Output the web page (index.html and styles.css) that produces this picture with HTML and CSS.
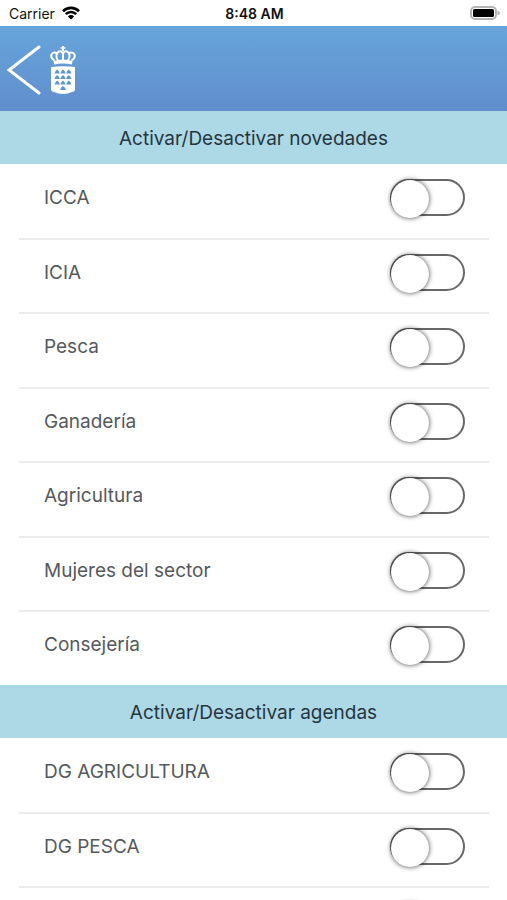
FILE: index.html
```html
<!DOCTYPE html>
<html lang="es">
<head>
  <meta charset="utf-8">
  <meta name="viewport" content="width=device-width, initial-scale=1">
  <title>Notificaciones</title>
  <link rel="stylesheet" href="styles.css">
</head>
<body>
  <div class="app">
    <div class="status">
      <div class="status-left">
        <span>Carrier</span>
        <svg class="wifi" viewBox="0 0 18 14" aria-hidden="true">
          <path d="M1 5.2a11.4 11.4 0 0 1 16 0" />
          <path d="M3.8 8.1a7.4 7.4 0 0 1 10.4 0" />
          <path class="solid" d="M9 13.6 5.9 10.4a4.4 4.4 0 0 1 6.2 0z" />
        </svg>
      </div>
      <span class="clock">8:48 AM</span>
      <svg class="battery" viewBox="0 0 30 14" aria-hidden="true">
        <rect class="shell" x="1" y="1" width="25" height="12" rx="4" />
        <rect x="3" y="3" width="21" height="8" rx="1.500" />
        <path class="tip" d="M27.5 4.5q2.5 1 2.5 2.5t-2.5 2.5z" />
      </svg>
    </div>

    <header class="bar">
      <button class="back" type="button" aria-label="Volver">
        <svg viewBox="0 0 34 50" aria-hidden="true"><path d="M32 2 2 25l30 23" /></svg>
      </button>
      <svg class="crest" viewBox="0 0 26 48" aria-hidden="true">
        <path class="fill" d="M12 0h2v1.200h1.500v1.600H14V5h-2V2.800h-1.500V1.200H12z" />
        <g class="crown">
          <path d="M4.500 14.500C1.500 12.500 .5 10 1.800 8 3.500 6 6.500 6 7.500 8.500" />
          <path d="M8 14.500C5.500 11 6 6.500 9 5.500c2.200-.6 3.500.5 4 2.500.5-2 1.800-3.100 4-2.500 3 1 3.500 5.500 1 9" />
          <path d="M21.500 14.500c3-2 4-4.500 2.700-6.500C22.500 6 19.500 6 18.500 8.500M13 6v8" />
        </g>
        <path class="fill" d="M3.500 15q9.500-3.200 19 0l-.7 3.500q-8.800-2.200-17.600 0z" />
        <path class="fill" d="M1 21q12-1.500 24 0v22q0 2.500-3 3-4 2-9 2t-9-2q-3-.5-3-3z" />
        <g class="peaks">
          <path d="M4.500 27.500q1-3 2.700-4 1.700 1 2.700 4zM10.300 27.500q1-3 2.700-4 1.700 1 2.700 4zM16.100 27.500q1-3 2.700-4 1.700 1 2.700 4z" />
          <path d="M4.500 33q1-3 2.700-4 1.700 1 2.700 4zM10.300 33q1-3 2.700-4 1.700 1 2.700 4zM16.100 33q1-3 2.700-4 1.700 1 2.700 4z" />
          <path d="M4.500 38.500q1-3 2.700-4 1.700 1 2.700 4zM10.300 38.500q1-3 2.700-4 1.700 1 2.700 4zM16.100 38.500q1-3 2.700-4 1.700 1 2.700 4z" />
          <path d="M10 44q1-3 3-4 2 1 3 4z" />
        </g>
      </svg>
    </header>

    <main>
      <h2 class="heading">Activar/Desactivar novedades</h2>
      <ul class="list">
        <li class="row"><label for="n1">ICCA</label><input class="toggle" id="n1" type="checkbox" role="switch"></li>
        <li class="row"><label for="n2">ICIA</label><input class="toggle" id="n2" type="checkbox" role="switch"></li>
        <li class="row"><label for="n3">Pesca</label><input class="toggle" id="n3" type="checkbox" role="switch"></li>
        <li class="row"><label for="n4">Ganadería</label><input class="toggle" id="n4" type="checkbox" role="switch"></li>
        <li class="row"><label for="n5">Agricultura</label><input class="toggle" id="n5" type="checkbox" role="switch"></li>
        <li class="row"><label for="n6">Mujeres del sector</label><input class="toggle" id="n6" type="checkbox" role="switch"></li>
        <li class="row"><label for="n7">Consejería</label><input class="toggle" id="n7" type="checkbox" role="switch"></li>
      </ul>
      <h2 class="heading">Activar/Desactivar agendas</h2>
      <ul class="list">
        <li class="row"><label for="a1">DG AGRICULTURA</label><input class="toggle" id="a1" type="checkbox" role="switch"></li>
        <li class="row"><label for="a2">DG PESCA</label><input class="toggle" id="a2" type="checkbox" role="switch"></li>
        <li class="row"><input class="toggle" type="checkbox" role="switch" aria-label="Agenda"></li>
      </ul>
    </main>
  </div>
</body>
</html>
```
FILE: styles.css
```css
* {
  box-sizing: border-box;
}

body {
  margin: 0;
  background: #fff;
  font-family: Inter, "Liberation Sans", sans-serif;
}

.app {
  display: flex;
  flex-direction: column;
  height: 100vh;
}

.status {
  flex: none;
  display: grid;
  grid-template-columns: 1fr auto 1fr;
  align-items: center;
  height: 26px;
  padding: 0 7px 0 9px;
  font-size: 14px;
  color: #111;
}

.status-left {
  display: flex;
  align-items: center;
  gap: 7px;
}

.wifi {
  width: 18px;
  height: 14px;
  fill: none;
  stroke: #000;
  stroke-width: 2.6;
}

.wifi .solid {
  fill: #000;
  stroke: none;
}

.clock {
  font-weight: 600;
}

.battery {
  justify-self: end;
  width: 30px;
  height: 14px;
}

.battery .shell {
  fill: none;
  stroke: #b4b4b4;
  stroke-width: 2;
}

.battery .tip {
  fill: #b4b4b4;
}

.bar {
  flex: none;
  display: flex;
  align-items: center;
  gap: 9px;
  height: 85px;
  padding: 3px 7px 0;
  background: linear-gradient(#66a5da, #618ecd);
}

.back {
  padding: 0;
  border: 0;
  background: none;
}

.back svg {
  display: block;
  width: 34px;
  height: 50px;
  fill: none;
  stroke: #fff;
  stroke-width: 3;
  stroke-linecap: round;
}

.crest {
  width: 26px;
  height: 48px;
}

.crest .fill {
  fill: #fff;
}

.crest .crown {
  fill: none;
  stroke: #fff;
  stroke-width: 2;
}

.crest .peaks {
  fill: #5f96d0;
}

main {
  flex: 1;
  min-height: 0;
  overflow: hidden auto;
  scrollbar-width: none;
}

.heading {
  margin: 0;
  padding-top: 2px;
  background: #add8e6;
  color: #263640;
  font-size: 19px;
  font-weight: 400;
  line-height: 51px;
  text-align: center;
}

.list {
  margin: 0;
  padding: 1px 18px 0 19px;
  list-style: none;
}

.row {
  display: flex;
  align-items: flex-start;
  justify-content: space-between;
  height: 75px;
  padding: 14px 24px 0 25px;
  border-bottom: 2px solid #ececec;
  color: #55595c;
  font-size: 19px;
  line-height: 38px;
}

.row:nth-child(even) {
  height: 74px;
}

.row:last-child {
  height: 73px;
  border-bottom: 0;
  justify-content: flex-end;
}

.row:last-child label {
  flex: 1;
}

.toggle {
  appearance: none;
  flex: none;
  width: 75px;
  height: 37px;
  margin: 0;
  border: 2px solid #68686a;
  border-radius: 19px;
  background: #fff;
}

.toggle::before {
  content: "";
  display: block;
  width: 38px;
  height: 38px;
  margin: -1px;
  border-radius: 50%;
  background: #fff;
  box-shadow: 0 0 5px rgba(0, 0, 0, 0.75);
}

.toggle:checked::before {
  margin-left: 34px;
}
```
